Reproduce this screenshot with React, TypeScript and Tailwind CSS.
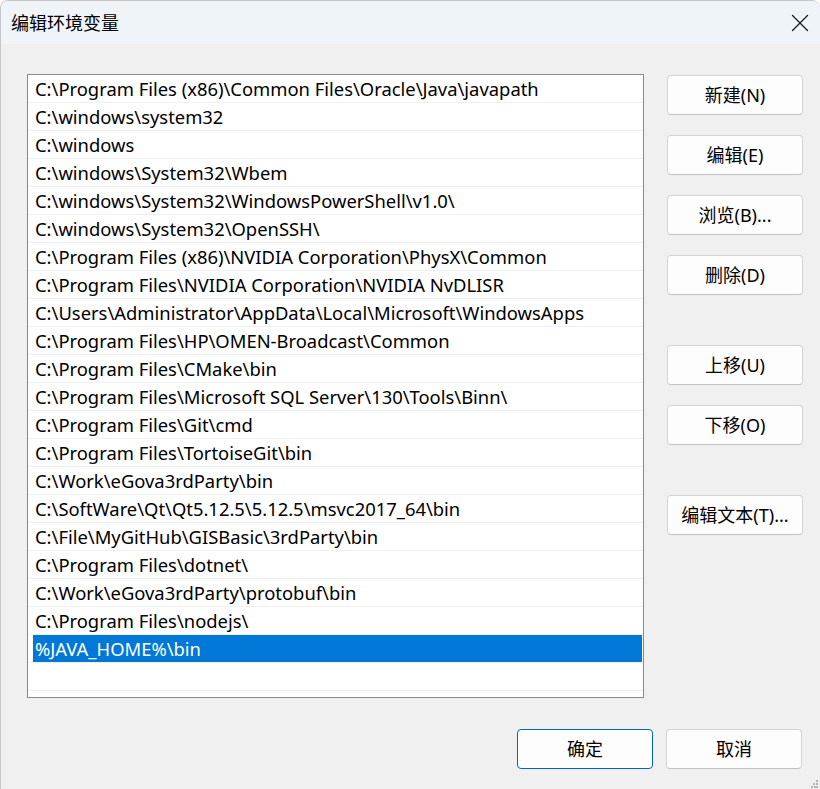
import React from "react";
import { X } from "lucide-react";

const paths = [
  "C:\\Program Files (x86)\\Common Files\\Oracle\\Java\\javapath",
  "C:\\windows\\system32",
  "C:\\windows",
  "C:\\windows\\System32\\Wbem",
  "C:\\windows\\System32\\WindowsPowerShell\\v1.0\\",
  "C:\\windows\\System32\\OpenSSH\\",
  "C:\\Program Files (x86)\\NVIDIA Corporation\\PhysX\\Common",
  "C:\\Program Files\\NVIDIA Corporation\\NVIDIA NvDLISR",
  "C:\\Users\\Administrator\\AppData\\Local\\Microsoft\\WindowsApps",
  "C:\\Program Files\\HP\\OMEN-Broadcast\\Common",
  "C:\\Program Files\\CMake\\bin",
  "C:\\Program Files\\Microsoft SQL Server\\130\\Tools\\Binn\\",
  "C:\\Program Files\\Git\\cmd",
  "C:\\Program Files\\TortoiseGit\\bin",
  "C:\\Work\\eGova3rdParty\\bin",
  "C:\\SoftWare\\Qt\\Qt5.12.5\\5.12.5\\msvc2017_64\\bin",
  "C:\\File\\MyGitHub\\GISBasic\\3rdParty\\bin",
  "C:\\Program Files\\dotnet\\",
  "C:\\Work\\eGova3rdParty\\protobuf\\bin",
  "C:\\Program Files\\nodejs\\",
  "%JAVA_HOME%\\bin",
];

const selected = 20;

function DialogButton({
  label,
  primary = false,
  className = "",
}: {
  label: string;
  primary?: boolean;
  className?: string;
}) {
  return (
    <button
      className={`w-[136px] h-[40px] rounded-[4px] bg-[#fdfdfd] text-[18px] text-black flex items-center justify-center ${
        primary
          ? "border border-[#0067c0]"
          : "border border-[#d4d4d4] border-b-[#c2c2c2]"
      } ${className}`}
    >
      {label}
    </button>
  );
}

export default function App() {
  return (
    <div
      className="w-[820px] h-[789px] bg-white overflow-hidden"
      style={{ fontFamily: '"Noto Sans", "Noto Sans CJK SC", sans-serif' }}
    >
      <div className="relative w-full h-full rounded-t-[8px] border-t border-l border-[#c8c8c8] bg-[#f0f0f0] flex flex-col overflow-hidden">
        {/* Title bar */}
        <div className="h-[43px] shrink-0 bg-[#eff4f9] flex items-center justify-between pl-[10px] pr-[5px]">
          <span className="text-[18px] text-black leading-none">编辑环境变量</span>
          <X className="w-[30px] h-[30px] text-[#1a1a1a]" strokeWidth={1} />
        </div>

        {/* Body */}
        <div className="flex pt-[30px] pl-[26px]">
          {/* Path list */}
          <div className="w-[617px] h-[624px] bg-white border border-[#8a8a8a]">
            {paths.map((p, i) => (
              <div
                key={p}
                className="h-[28px] border-b border-[#f0f0f0] flex items-stretch"
              >
                <div
                  className={`flex-1 flex items-center pl-[2px] ml-[5px] mr-[1px] pt-[1px] text-[18.4px] leading-none whitespace-nowrap ${
                    i === selected ? "bg-[#0078d7] text-white" : "text-black"
                  }`}
                >
                  {p}
                </div>
              </div>
            ))}
            <div className="h-[28px] border-b border-[#f0f0f0]" />
          </div>

          {/* Side buttons */}
          <div className="ml-[23px] pt-[1px] flex flex-col">
            <DialogButton label="新建(N)" />
            <DialogButton label="编辑(E)" className="mt-[20px]" />
            <DialogButton label="浏览(B)..." className="mt-[20px]" />
            <DialogButton label="删除(D)" className="mt-[20px]" />
            <DialogButton label="上移(U)" className="mt-[50px]" />
            <DialogButton label="下移(O)" className="mt-[20px]" />
            <DialogButton label="编辑文本(T)..." className="mt-[50px]" />
          </div>
        </div>

        {/* Footer buttons */}
        <div className="flex justify-end gap-[13px] pr-[18px] mt-[31px]">
          <DialogButton label="确定" primary />
          <DialogButton label="取消" />
        </div>

        {/* Resize grip */}
        <svg
          className="absolute right-[1px] bottom-[1px]"
          width="8"
          height="8"
          viewBox="0 0 8 8"
        >
          <rect x="5" y="0" width="2" height="2" fill="#b4b4b4" />
          <rect x="2" y="3" width="2" height="2" fill="#b4b4b4" />
          <rect x="5" y="3" width="2" height="2" fill="#b4b4b4" />
          <rect x="0" y="6" width="2" height="2" fill="#b4b4b4" />
          <rect x="3" y="6" width="2" height="2" fill="#b4b4b4" />
          <rect x="5" y="6" width="2" height="2" fill="#b4b4b4" />
        </svg>
      </div>
    </div>
  );
}
